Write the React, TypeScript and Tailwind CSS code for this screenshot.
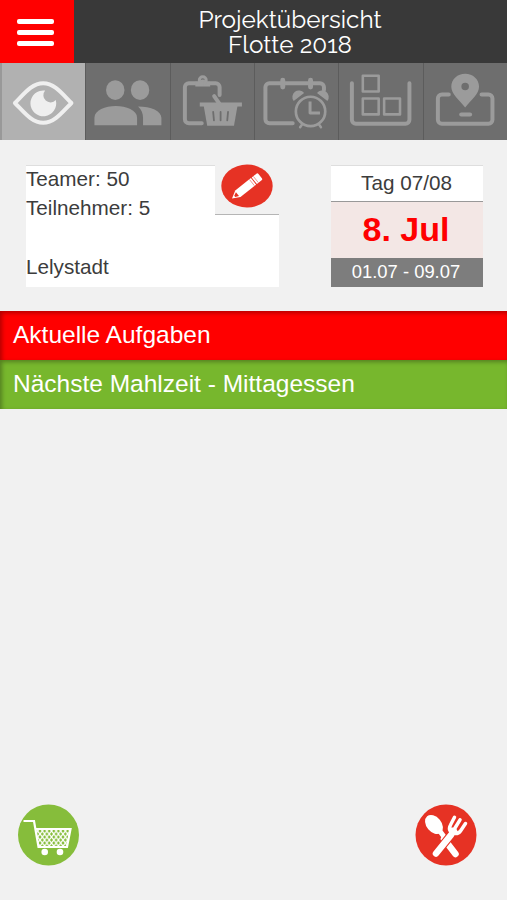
import React from 'react';

interface TabProps {
    label: string;
    active?: boolean;
    children: React.ReactNode;
}

const Tab: React.FC<TabProps> = ({ label, active = false, children }) => (
    <button
        aria-label={label}
        className={
            active
                ? "flex-1 h-full text-[#efefef] bg-[#b1b1b1] border-l-2 border-[#999999]"
                : "flex-1 h-full text-[#9b9b9b] bg-[#6e6e6e] border-l border-[#5c5c5c]"
        }
    >
        <svg viewBox="0 0 84 77" className="block w-full h-full" fill="none" stroke="currentColor" strokeWidth="4" strokeLinecap="round" strokeLinejoin="round">
            {children}
        </svg>
    </button>
);

const EyeIcon = () => (
    <>
        <path d="M13 40C22 31 30 20 41.500 20S61 31 70 40C61 49 53 60 41.500 60S22 49 13 40Z" />
        <path stroke="none" fill="currentColor" d="M43.500 27.500a13 13 0 1 0 10.700 9.500 5.800 5.800 0 0 1-10.700-9.500Z" />
    </>
);

const PeopleIcon = () => (
    <g stroke="none" fill="currentColor">
        <ellipse cx="29.500" cy="27" rx="9.300" ry="10" />
        <ellipse cx="54.500" cy="27" rx="9.300" ry="10" />
        <path d="M8.500 62.500V55C8.500 47 19.500 43 30 43S51.500 47 51.500 55v7.500Z" />
        <path d="M52.500 43.500C65.500 43.500 76 48 76 55v7.500H57.500V55c0-4.500-1.500-8.500-5-11.500Z" />
    </g>
);

const ShoppingListIcon = () => (
    <>
        <path d="M31 60.500H18a4 4 0 0 1-4-4V24a4 4 0 0 1 4-4h27a4 4 0 0 1 4 4v8" />
        <path d="M24.500 23.500v-5h4a4 4 0 0 1 7 0h4v5Z" stroke="none" fill="currentColor" />
        <circle cx="32" cy="17" r="3.500" strokeWidth="3" />
        <path d="M43.500 33l7.500 11" />
        <path d="M31 41.500h38.500" strokeLinecap="square" />
        <path d="M33 43h34l-3.500 20H36.500Z" stroke="none" fill="currentColor" />
        <path d="M42.500 49l.8 8.500M50 49v8.500M57.500 49l-.8 8.500" stroke="#6e6e6e" strokeWidth="1.800" />
    </>
);

const ScheduleIcon = () => (
    <>
        <path d="M38 60.500H14.500a4 4 0 0 1-4-4V24a4 4 0 0 1 4-4h51a4 4 0 0 1 4 4v3" />
        <path d="M28 17v7M56 17v7" strokeWidth="5" />
        <circle cx="56" cy="48.500" r="14.800" strokeWidth="2.700" />
        <path d="M55.500 38.500v11.500h10" strokeWidth="3" strokeLinecap="butt" />
        <path d="M39 38a6.500 6.500 0 0 1 10.500-8ZM73 38a6.500 6.500 0 0 0-10.500-8Z" stroke="none" fill="currentColor" />
        <path d="M47.500 61.500l-2 3M64.500 61.500l2 3" strokeWidth="2.500" />
    </>
);

const StockIcon = () => (
    <>
        <path d="M13 20v37a4 4 0 0 0 4 4h50a4 4 0 0 0 4-4V20" />
        <path d="M24 12.500h16v16h-16ZM24 35.500h16v16h-16ZM45.500 35.500h16v16H45.500Z" strokeWidth="2.600" />
    </>
);

const MapIcon = () => (
    <>
        <path d="M25 31.500h-7a4 4 0 0 0-4 4V57a4 4 0 0 0 4 4h47a4 4 0 0 0 4-4V35.500a4 4 0 0 0-4-4h-7" />
        <path
            stroke="none"
            fill="currentColor"
            fillRule="evenodd"
            d="M41.500 10.500c-7.700 0-14 5.500-14 13 0 8 8 13.500 14 21 6-7.500 14-13 14-21 0-7.500-6.300-13-14-13Zm0 9a3.800 3.800 0 1 0 0 7.600 3.800 3.800 0 0 0 0-7.600Z"
        />
        <path d="M37.500 51.500h9" />
    </>
);

const PencilIcon = () => (
    <svg viewBox="0 0 52 44" className="block w-[52px] h-11">
        <ellipse cx="26" cy="22" rx="25.700" ry="21.500" fill="#e63224" />
        <g transform="translate(11 34.500) rotate(-38.500)">
            <path d="M0 0L7.500-4.200H27.500V4.200H7.500Z" fill="white" />
            <path d="M28.500-4.200h6a1.500 1.500 0 0 1 1.500 1.500v5.400A1.500 1.500 0 0 1 34.500 4.200H28.500Z" fill="white" />
            <path d="M3.500-.8L7-2.500V2.500L3.500.8Z" fill="#e63224" />
            <path d="M25.500-4V4M30.500-4V4" stroke="#ee8c83" strokeWidth=".8" />
        </g>
    </svg>
);

const CartIcon = () => (
    <svg viewBox="0 0 62 62" className="block w-[62px] h-[62px]">
        <defs>
            <pattern id="mesh" width="4.600" height="6" patternUnits="userSpaceOnUse">
                <path d="M0 0L4.600 6M4.600 0L0 6" stroke="white" strokeWidth="1.300" />
            </pattern>
        </defs>
        <circle cx="31.500" cy="31" r="30.500" fill="#86bd3b" />
        <path d="M18 25H53.500L50 43H21.500Z" fill="url(#mesh)" />
        <path d="M6.500 17H17L21.500 43H50L53.500 25H18.500" fill="none" stroke="white" strokeWidth="2.200" />
        <circle cx="27.700" cy="48" r="3.300" fill="white" />
        <circle cx="43" cy="48" r="3.300" fill="white" />
    </svg>
);

const MealIcon = () => (
    <svg viewBox="0 0 62 62" className="block w-[62px] h-[62px]" fill="none" stroke="white" strokeLinecap="round">
        <circle cx="31" cy="31" r="30.500" fill="#e63224" stroke="none" />
        <ellipse cx="19" cy="20.500" rx="7.500" ry="10.700" fill="white" stroke="none" transform="rotate(-40 19 20.500)" />
        <path d="M24 26l4.500 6" strokeWidth="5" />
        <path d="M29 35L40.500 50" strokeWidth="6.500" />
        <path d="M21 49.500L36 31" stroke="#e63224" strokeWidth="8.500" />
        <path d="M21 49.500L36 31" strokeWidth="6.500" />
        <path d="M39.500 13.300L35.500 21c-2.500 4.500 0 8 4 8.500 3 .4 5-1 6-2.500L50.500 19.500" strokeWidth="3.500" />
        <path d="M45 15.800L40 24" strokeWidth="3.500" />
        <path d="M35.500 24.500l1 5.500 6-1-2.500-4.500Z" fill="white" strokeWidth="2" />
    </svg>
);

export default function App() {
    return (
        <div className="flex flex-col w-full h-[900px] bg-[#f1f1f1] text-[#3c3c3c] font-['Liberation_Sans',Arial,sans-serif] overflow-hidden">
            <header className="flex h-[63px] shrink-0 bg-[#393939]">
                <button aria-label="Menü" className="flex flex-col items-center justify-center gap-[6px] w-[74px] bg-[#ff0000] pt-[2px] pr-1">
                    <span className="w-[37px] h-[5px] rounded-xs bg-white" />
                    <span className="w-[37px] h-[5px] rounded-xs bg-white" />
                    <span className="w-[37px] h-[5px] rounded-xs bg-white" />
                </button>
                <h1 className="flex-1 pt-[7px] pr-[1px] text-center text-[24.3px] leading-[25px] text-white font-['Raleway','Lato',sans-serif]">
                    Projektübersicht<br />Flotte 2018
                </h1>
            </header>

            <nav className="flex h-[77px] shrink-0">
                <Tab label="Übersicht" active><EyeIcon /></Tab>
                <Tab label="Personen"><PeopleIcon /></Tab>
                <Tab label="Einkauf"><ShoppingListIcon /></Tab>
                <Tab label="Termine"><ScheduleIcon /></Tab>
                <Tab label="Lager"><StockIcon /></Tab>
                <Tab label="Karte"><MapIcon /></Tab>
            </nav>

            <section className="flex justify-between h-[171px] shrink-0 pt-[25px] pl-[26px] pr-6">
                <div className="flex w-[253px] h-[122px] bg-white">
                    <div className="flex-1 border-t border-[#dedede] text-[20.7px] leading-[29.3px]">
                        <div className="-mt-[2.4px]">
                            <p>Teamer: 50</p>
                            <p>Teilnehmer: 5</p>
                            <p>&nbsp;</p>
                            <p>Lelystadt</p>
                        </div>
                    </div>
                    <button aria-label="Bearbeiten" className="flex justify-center items-start w-16 h-[50px] bg-[#f1f1f1] border-b border-[#b5b5b5]">
                        <span className="-mt-px"><PencilIcon /></span>
                    </button>
                </div>
                <div className="flex flex-col w-[152px] h-[122px] text-center">
                    <div className="h-[37px] pr-px border-t border-b border-t-[#dedede] border-b-[#999999] bg-white text-[20.7px] leading-[34px]">Tag 07/08</div>
                    <div className="h-[56px] pr-[2px] bg-[#f3e7e5] text-[#ff0000] text-[34px] leading-[55px] font-bold">8. Jul</div>
                    <div className="h-[29px] pr-[2px] bg-[#7d7d7d] text-white text-[18.4px] leading-[28px]">01.07 - 09.07</div>
                </div>
            </section>

            <div className="h-[49px] shrink-0 pl-[13px] bg-[#ff0000] text-white text-[24.5px] leading-[48px] shadow-[inset_2px_2px_4px_rgba(0,0,0,0.3)]">
                Aktuelle Aufgaben
            </div>
            <div className="h-[49px] shrink-0 pl-[13px] bg-[#77b72d] text-white text-[24.5px] leading-[48px] shadow-[inset_2px_2px_4px_rgba(0,0,0,0.3)]">
                Nächste Mahlzeit - Mittagessen
            </div>

            <footer className="flex justify-between mt-auto pl-[17px] pr-[30px] pb-[34px]">
                <button aria-label="Einkaufswagen"><CartIcon /></button>
                <button aria-label="Mahlzeiten"><MealIcon /></button>
            </footer>
        </div>
    );
}
